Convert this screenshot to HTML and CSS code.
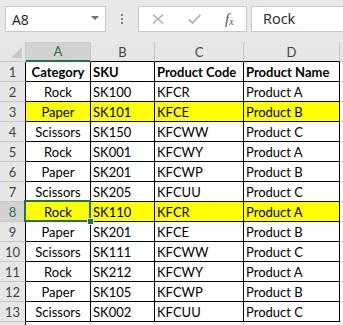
FILE: index.html
```html
<!DOCTYPE html>
<html>
<head>
<meta charset="utf-8">
<title>Sheet1</title>
<link rel="stylesheet" href="styles.css">
</head>
<body>
<div class="bar">
  <div class="namebox"><span class="ref">A8</span><span class="caret"></span></div>
  <div class="grip"><i></i><i></i><i></i></div>
  <div class="fxbtns">
    <svg class="btn" width="12" height="10" viewBox="0 0 12 10"><path d="M1 0.5 L11 9.5 M11 0.5 L1 9.5" stroke="#ababab" stroke-width="1.4" fill="none"/></svg>
    <svg class="btn" width="13" height="10" viewBox="0 0 13 10"><path d="M0.8 5.2 L4.5 9 L12.3 0.8" stroke="#ababab" stroke-width="1.6" fill="none"/></svg>
    <span class="fx">f<sub>x</sub></span>
  </div>
  <div class="formula">Rock</div>
</div>

<div class="sheet">
  <div class="row head">
    <div class="corner"><svg width="26" height="20" viewBox="0 0 26 20"><polygon points="22,5 22,16 11,16" fill="#c9c9c9"/></svg></div>
    <div class="col sel">A</div><div class="col">B</div><div class="col">C</div><div class="col">D</div><div class="col last"></div>
  </div>
  <div class="row">
    <div class="num">1</div>
    <div class="cell mid bold">Category</div><div class="cell bold">SKU</div><div class="cell bold">Product Code</div><div class="cell bold">Product Name</div><div class="cell out"></div>
  </div>
  <div class="row">
    <div class="num">2</div>
    <div class="cell mid">Rock</div><div class="cell">SK100</div><div class="cell">KFCR</div><div class="cell">Product A</div><div class="cell out"></div>
  </div>
  <div class="row hi">
    <div class="num">3</div>
    <div class="cell mid">Paper</div><div class="cell">SK101</div><div class="cell">KFCE</div><div class="cell">Product B</div><div class="cell out"></div>
  </div>
  <div class="row">
    <div class="num">4</div>
    <div class="cell mid">Scissors</div><div class="cell">SK150</div><div class="cell">KFCWW</div><div class="cell">Product C</div><div class="cell out"></div>
  </div>
  <div class="row">
    <div class="num">5</div>
    <div class="cell mid">Rock</div><div class="cell">SK001</div><div class="cell">KFCWY</div><div class="cell">Product A</div><div class="cell out"></div>
  </div>
  <div class="row">
    <div class="num">6</div>
    <div class="cell mid">Paper</div><div class="cell">SK201</div><div class="cell">KFCWP</div><div class="cell">Product B</div><div class="cell out"></div>
  </div>
  <div class="row">
    <div class="num">7</div>
    <div class="cell mid">Scissors</div><div class="cell">SK205</div><div class="cell">KFCUU</div><div class="cell">Product C</div><div class="cell out"></div>
  </div>
  <div class="row hi">
    <div class="num sel">8</div>
    <div class="cell mid active">Rock</div><div class="cell">SK110</div><div class="cell">KFCR</div><div class="cell">Product A</div><div class="cell out"></div>
  </div>
  <div class="row">
    <div class="num">9</div>
    <div class="cell mid">Paper</div><div class="cell">SK201</div><div class="cell">KFCE</div><div class="cell">Product B</div><div class="cell out"></div>
  </div>
  <div class="row">
    <div class="num">10</div>
    <div class="cell mid">Scissors</div><div class="cell">SK111</div><div class="cell">KFCWW</div><div class="cell">Product C</div><div class="cell out"></div>
  </div>
  <div class="row">
    <div class="num">11</div>
    <div class="cell mid">Rock</div><div class="cell">SK212</div><div class="cell">KFCWY</div><div class="cell">Product A</div><div class="cell out"></div>
  </div>
  <div class="row">
    <div class="num">12</div>
    <div class="cell mid">Paper</div><div class="cell">SK105</div><div class="cell">KFCWP</div><div class="cell">Product B</div><div class="cell out"></div>
  </div>
  <div class="row">
    <div class="num">13</div>
    <div class="cell mid">Scissors</div><div class="cell">SK002</div><div class="cell">KFCUU</div><div class="cell">Product C</div><div class="cell out"></div>
  </div>
  <div class="row">
    <div class="num"></div>
    <div class="cell blank"></div><div class="cell blank"></div><div class="cell blank"></div><div class="cell blank"></div><div class="cell out"></div>
  </div>
</div>
</body>
</html>
```

FILE: styles.css
```css
html, body {
  margin: 0;
  padding: 0;
  overflow: hidden;
  background: #ffffff;
}
body {
  width: 343px;
  height: 325px;
  font-family: Lato, "Liberation Sans", sans-serif;
}

/* formula bar */
.bar {
  height: 42px;
  box-sizing: border-box;
  padding: 6px 0 0 5px;
  background: #e8e8e8;
  display: flex;
  align-items: flex-start;
  white-space: nowrap;
}
.bar > div {
  flex-shrink: 0;
}
.namebox {
  width: 101px;
  height: 26px;
  box-sizing: border-box;
  border: 1px solid #c8c8c8;
  background: #fff;
  display: flex;
  align-items: center;
  padding-left: 6px;
}
.ref {
  font-family: "Open Sans", "Noto Sans", sans-serif;
  font-size: 14px;
  color: #222;
  flex: 1;
}
.caret {
  width: 0;
  height: 0;
  border-left: 4px solid transparent;
  border-right: 4px solid transparent;
  border-top: 4px solid #707070;
  margin: 0 6px 3px 0;
}
.grip {
  width: 32px;
  height: 26px;
  display: flex;
  flex-direction: column;
  align-items: center;
  justify-content: center;
  gap: 2px;
}
.grip i {
  width: 2px;
  height: 2px;
  background: #808080;
}
.fxbtns {
  width: 109px;
  height: 26px;
  box-sizing: border-box;
  border: 1px solid #c8c8c8;
  background: #fff;
  display: flex;
  align-items: center;
  padding-left: 13px;
  gap: 24px;
}
.fx {
  font-family: "Liberation Serif", serif;
  font-style: italic;
  font-size: 15px;
  color: #555;
}
.fx sub {
  font-size: 10px;
  vertical-align: -1px;
}
.bar > .formula {
  flex: 1;
  flex-shrink: 1;
  min-width: 0;
  margin-left: 4px;
  height: 26px;
  box-sizing: border-box;
  border: 1px solid #c8c8c8;
  border-right: 0;
  background: #fff;
  padding-left: 11px;
  font-family: "Open Sans", "Noto Sans", sans-serif;
  font-size: 14.5px;
  line-height: 24px;
  color: #222;
}

/* sheet grid */
.sheet {
  height: 283px;
  overflow: hidden;
}
.row {
  display: grid;
  grid-template-columns: 26px 65px 64px 89px 96px 1fr;
  height: 20px;
}
.row > div {
  box-sizing: border-box;
  height: 20px;
  border-right: 1px solid #000;
  border-bottom: 1px solid #000;
  font-size: 13px;
  line-height: 19px;
  padding-top: 1px;
  overflow: hidden;
  white-space: nowrap;
}
.corner {
  background: #e6e6e6;
  padding-top: 0 !important;
  border-right-color: #c6c6c6 !important;
  border-bottom-color: #c6c6c6 !important;
}
.corner svg {
  display: block;
}
.col {
  background: #e6e6e6;
  color: #444;
  text-align: center;
  border-right-color: #c6c6c6 !important;
}
.col.sel {
  background: #d2d2d2;
  color: #217346;
  border-bottom: 2px solid #217346 !important;
  line-height: 17px;
}
.col.last {
  border-right: 0 !important;
  border-bottom-color: #c6c6c6 !important;
}
.num {
  background: #e6e6e6;
  color: #444;
  text-align: center;
  border-bottom-color: #c6c6c6 !important;
}
.num.sel {
  background: #d2d2d2;
  color: #217346;
}
.cell {
  padding-left: 2px;
  color: #000;
}
.cell.mid {
  text-align: center;
  padding-left: 0;
}
.bold {
  font-weight: bold;
}
.hi .cell {
  background: #ffff00;
}
.row .out,
.hi .out {
  background: #fff;
  border-right: 0;
  border-bottom-color: #d4d4d4;
}
.row .blank {
  border-right-color: #d4d4d4;
  border-bottom-color: #d4d4d4;
}
.active {
  position: relative;
  z-index: 3;
  overflow: visible !important;
}
.active::after {
  content: "";
  display: block;
  position: absolute;
  z-index: 1;
  left: -2px;
  top: -2px;
  width: 67px;
  height: 22px;
  box-sizing: border-box;
  border: 2px solid #217346;
}
.active::before {
  content: "";
  position: absolute;
  right: -4px;
  bottom: -4px;
  width: 5px;
  height: 5px;
  background: #217346;
  border: 1px solid #fff;
  z-index: 2;
}
```
